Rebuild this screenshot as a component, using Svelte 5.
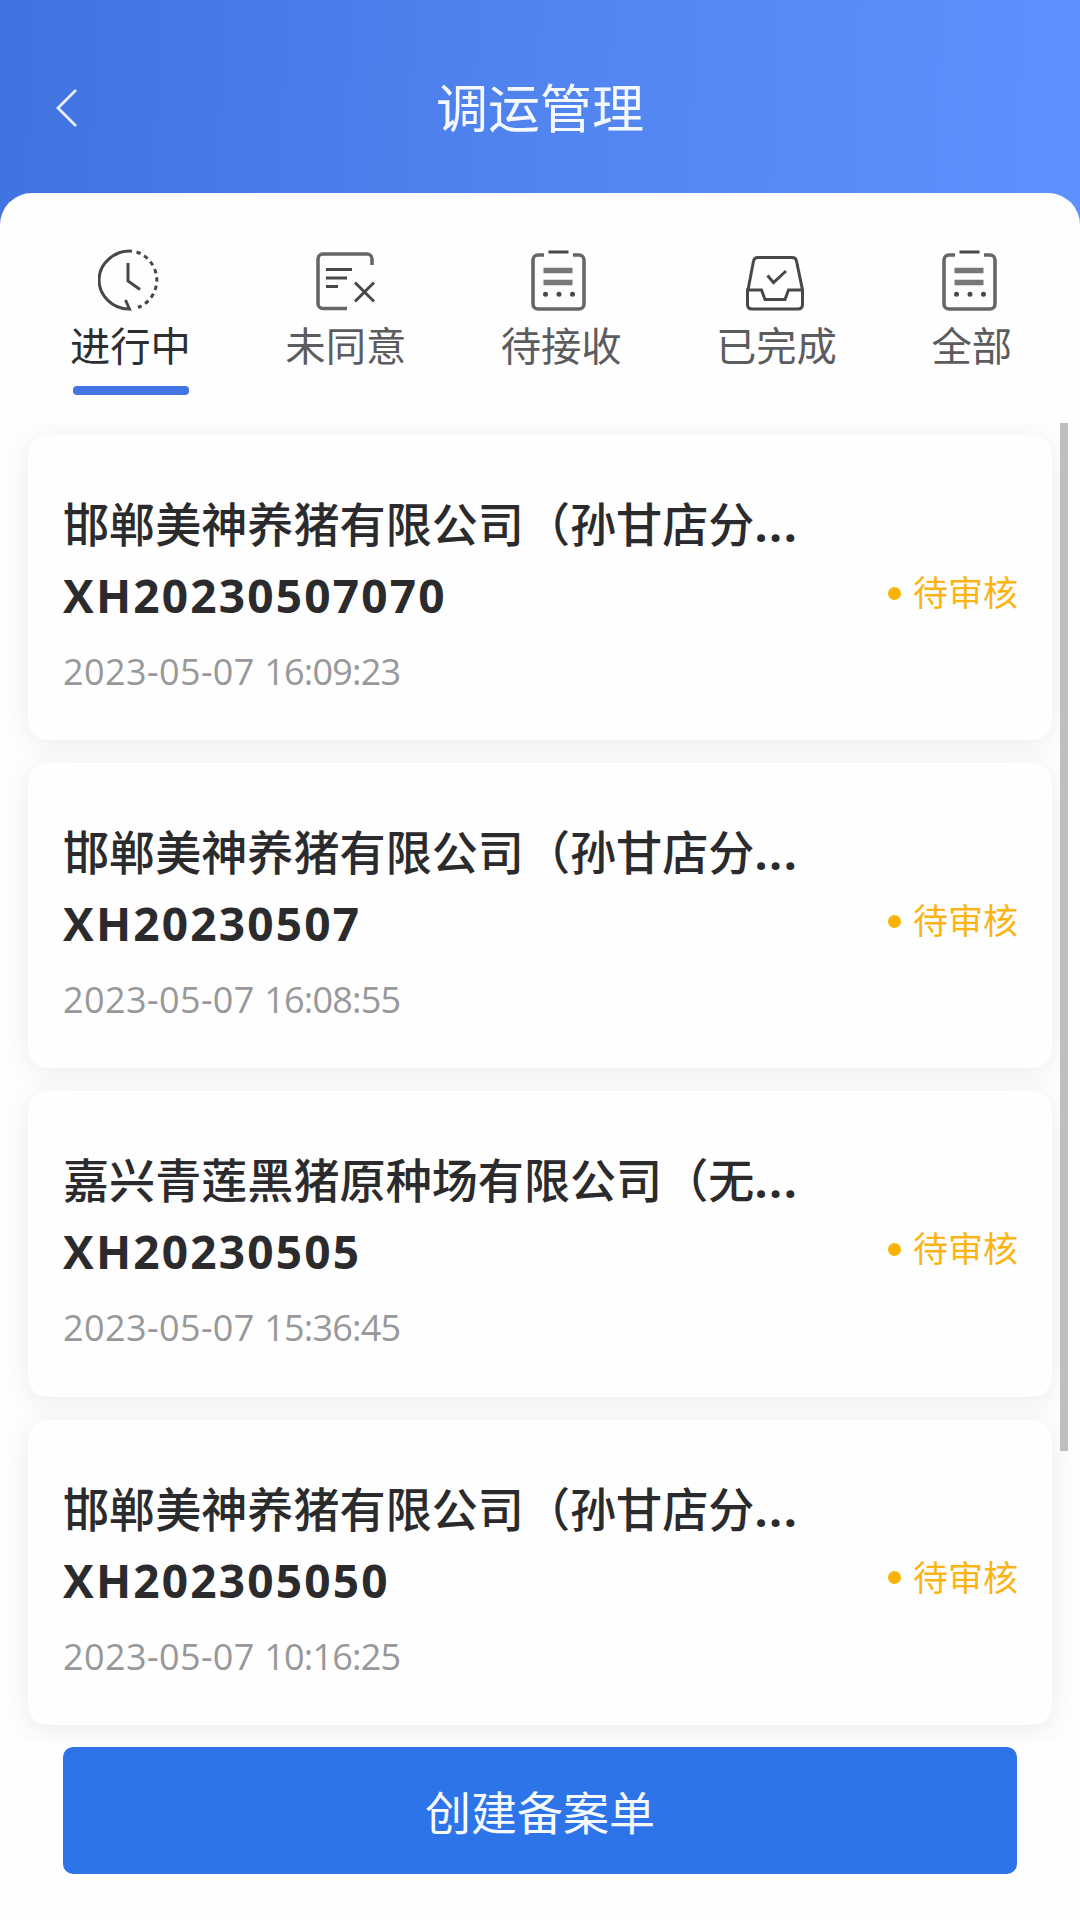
<script>
  let active = 0;

  const tabs = [
    { label: "进行中", icon: "clock" },
    { label: "未同意", icon: "reject" },
    { label: "待接收", icon: "clipboard" },
    { label: "已完成", icon: "inbox" },
    { label: "全部", icon: "clipboard" },
  ];

  const records = [
    {
      company: "邯郸美神养猪有限公司（孙甘店分公司）",
      code: "XH20230507070",
      date: "2023-05-07",
      time: "16:09:23",
      status: "待审核",
    },
    {
      company: "邯郸美神养猪有限公司（孙甘店分公司）",
      code: "XH20230507",
      date: "2023-05-07",
      time: "16:08:55",
      status: "待审核",
    },
    {
      company: "嘉兴青莲黑猪原种场有限公司（无害化）",
      code: "XH20230505",
      date: "2023-05-07",
      time: "15:36:45",
      status: "待审核",
    },
    {
      company: "邯郸美神养猪有限公司（孙甘店分公司）",
      code: "XH202305050",
      date: "2023-05-07",
      time: "10:16:25",
      status: "待审核",
    },
  ];

  // company names are cut to 15 characters
  const shorten = (name) => name.slice(0, 15);
</script>

<div class="page">
  <header class="header">
    <button class="back" aria-label="返回">
      <svg viewBox="0 0 24 40"><path d="M22 2 4 20l18 18" /></svg>
    </button>
    <h1>调运管理</h1>
  </header>

  <main class="panel">
    <nav class="tabs">
      {#each tabs as tab, i}
        <button
          class="tab"
          class:active={active === i}
          on:click={() => (active = i)}
        >
          <svg class="icon" viewBox="0 0 64 64">
            {#if tab.icon === "clock"}
              <path d="M34 3.2C16 2 1 16 1 32C1 47 14 61 31 61M27.500 52 31.500 61 24 60.500M30 15V33L42 41.500" />
              <path class="dashes" d="M38.500 4A29.500 29.500 0 0 1 40 59.500" />
            {:else if tab.icon === "reject"}
              <path class="soft" d="M58 17V11a5 5 0 0 0-5-5H9a5 5 0 0 0-5 5v44.500a5 5 0 0 0 5 5h24" />
              <path d="M12 21.500h26M12 30h21M12 38.500h12M41 34.500l19 19M60 34.500 41 53.500" />
            {:else if tab.icon === "clipboard"}
              <path class="soft" d="M15 7h-6a5 5 0 0 0-5 5v44a5 5 0 0 0 5 5h41a5 5 0 0 0 5-5V12a5 5 0 0 0-5-5h-6" />
              <path d="M19.500 4h20" />
              <path class="thick" d="M14.500 22.500h29M14.500 34.500h29" />
              <path class="dots" d="M16.500 46.300h.01M30 46.300h.01M43.500 46.300h.01" />
            {:else}
              <path d="M4 42 9.500 13Q10 9.500 14 9.500H48Q52 9.500 52.500 13L58.500 42V56.500Q58.500 61 54 61H8Q3.500 61 3.500 56.500V42H17.500L21 51.500H41L44.500 42H58.500" />
              <path d="M23.500 27.500 29.500 34.500 42 23" />
            {/if}
          </svg>
          <span>{tab.label}</span>
        </button>
      {/each}
    </nav>

    <section class="list">
      {#each records as item}
        <article class="card">
          <div class="info">
            <div class="company">{shorten(item.company)}<span>...</span></div>
            <div class="code">{item.code}</div>
            <div class="time">
              <span class="day">{item.date}</span>
              <span class="clock">{item.time}</span>
            </div>
          </div>
          <div class="status">{item.status}</div>
        </article>
      {/each}
      <div class="thumb"></div>
    </section>

    <footer class="footer">
      <button class="create">创建备案单</button>
    </footer>
  </main>
</div>

<style>
  :global(body) {
    background: #fdfdfe;
  }

  button {
    border: none;
    background: none;
    padding: 0;
    font: inherit;
    cursor: pointer;
  }

  .page {
    height: 1920px;
    overflow: hidden;
    display: flex;
    flex-direction: column;
    background: linear-gradient(92deg, #4073e0 0%, #5385f1 50%, #6093ff 100%);
    font-family: "Open Sans", "Noto Sans CJK SC", sans-serif;
  }

  .header {
    height: 193px;
    flex: none;
    display: grid;
    grid-template-columns: 108px 1fr 108px;
    align-items: center;
    box-sizing: border-box;
    padding-top: 22px;
  }

  .back {
    justify-self: start;
    margin-left: 54px;
    width: 24px;
    height: 40px;
  }

  .back svg {
    display: block;
    fill: none;
    stroke: #e6eefe;
    stroke-width: 2.8;
  }

  h1 {
    margin: 0;
    text-align: center;
    color: #f4f8ff;
    font-size: 52px;
    font-weight: 400;
    line-height: 72px;
  }

  .panel {
    flex: 1;
    min-height: 0;
    display: flex;
    flex-direction: column;
    background: #fefefe;
    border-radius: 32px 32px 0 0;
  }

  .tabs {
    flex: none;
    height: 219px;
    box-sizing: border-box;
    padding: 55px 68px 0 70px;
    display: flex;
    justify-content: space-between;
    align-items: flex-start;
  }

  .tab {
    display: flex;
    flex-direction: column;
    align-items: center;
    color: #5c5c5e;
    font-size: 40.3px;
    line-height: 56px;
  }

  .tab.active {
    color: #2e2e30;
  }

  .tab.active::after {
    content: "";
    width: 116px;
    height: 9px;
    margin: 12px 0 0 2px;
    border-radius: 4px;
    background: #4374e4;
  }

  .icon {
    width: 64px;
    height: 64px;
    margin-bottom: 6px;
    fill: none;
    stroke: #48484a;
    stroke-width: 3;
  }

  .soft {
    stroke: #666;
    stroke-width: 3.6;
  }

  .dashes {
    stroke-dasharray: 4.5 4;
  }

  .thick {
    stroke: #777;
    stroke-width: 5.5;
  }

  .dots {
    stroke-width: 5;
    stroke-linecap: round;
  }

  .list {
    position: relative;
    flex: none;
    height: 1330px;
    box-sizing: border-box;
    overflow: hidden;
    padding: 23px 28px 0;
    display: flex;
    flex-direction: column;
    gap: 23px;
  }

  .card {
    flex: none;
    height: 305.2px;
    box-sizing: border-box;
    padding: 58px 34px 0 35px;
    display: flex;
    justify-content: space-between;
    border-radius: 20px;
    background: #fefefe;
    box-shadow: 0 5px 26px rgba(80, 65, 100, 0.1);
  }

  .company {
    white-space: nowrap;
    color: #2b2b2d;
    font-size: 46.1px;
    font-weight: 500;
    line-height: 64px;
  }

  .company span {
    font-weight: 700;
    letter-spacing: 1.5px;
  }

  .code {
    margin-top: 6px;
    color: #2b2b2d;
    font-size: 46px;
    font-weight: 700;
    line-height: 64px;
    letter-spacing: 2.2px;
  }

  .time {
    margin-top: 20px;
    color: #98989a;
    font-size: 36px;
    line-height: 50px;
  }

  .day {
    letter-spacing: 0.4px;
  }

  .clock {
    letter-spacing: -0.8px;
  }

  .status {
    display: flex;
    align-items: center;
    gap: 12px;
    height: 48px;
    margin-top: 76px;
    color: #fab414;
    font-size: 35px;
    line-height: 48px;
    white-space: nowrap;
  }

  .status::before {
    content: "";
    width: 13px;
    height: 13px;
    border-radius: 50%;
    background: #fbb204;
  }

  /* scroll indicator lies over the right edge of the list */
  .thumb {
    position: absolute;
    top: 11px;
    right: 12px;
    width: 8px;
    height: 1028px;
    background: #bebdbf;
  }

  .footer {
    padding: 5px 63px 0;
  }

  .create {
    display: block;
    width: 100%;
    height: 127px;
    padding-bottom: 2px;
    border-radius: 10px;
    background: #2e74e9;
    color: #f6faff;
    font-size: 46px;
  }
</style>
